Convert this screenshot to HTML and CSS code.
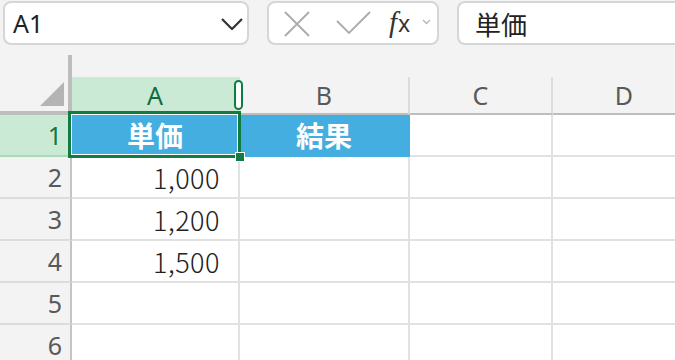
FILE: index.html
```html
<!DOCTYPE html>
<html lang="ja">
<head>
  <meta charset="UTF-8">
  <title>Sheet</title>
  <link rel="stylesheet" href="styles.css">
</head>
<body>
  <div class="toolbar">
    <div class="namebox">
      <span>A1</span>
      <svg class="chev" width="22" height="12" viewBox="0 0 22 12"><polyline points="1,1 11,11 21,1" fill="none" stroke="#333" stroke-width="2.2"/></svg>
    </div>
    <div class="fxbox">
      <svg class="icon-x" width="26" height="26" viewBox="0 0 26 26"><path d="M1 1 L25 25 M25 1 L1 25" stroke="#ababab" stroke-width="1.8" fill="none"/></svg>
      <svg class="icon-ok" width="36" height="24" viewBox="0 0 36 24"><polyline points="1,10 13,22 34,1" fill="none" stroke="#ababab" stroke-width="1.8"/></svg>
      <span class="fx"><i>f</i>x</span>
      <svg class="chev-sm" width="9" height="6" viewBox="0 0 9 6"><polyline points="1,1 4.5,4.5 8,1" fill="none" stroke="#b5b5b5" stroke-width="1.3"/></svg>
    </div>
    <div class="formula">単価</div>
  </div>
  <div class="splitbar"><div class="splitter"></div></div>

  <div class="sheet">
    <div class="corner"><div class="tri"></div></div>
    <div class="colhead active">A<div class="pill"></div></div>
    <div class="colhead">B</div>
    <div class="colhead">C</div>
    <div class="colhead">D</div>

    <div class="rowhead active">1</div>
    <div class="cell title selected">単価<div class="sel"></div><div class="handle"></div></div>
    <div class="cell title">結果</div>
    <div class="cell"></div>
    <div class="cell"></div>

    <div class="rowhead">2</div>
    <div class="cell num">1,000</div>
    <div class="cell"></div>
    <div class="cell"></div>
    <div class="cell"></div>

    <div class="rowhead">3</div>
    <div class="cell num">1,200</div>
    <div class="cell"></div>
    <div class="cell"></div>
    <div class="cell"></div>

    <div class="rowhead">4</div>
    <div class="cell num">1,500</div>
    <div class="cell"></div>
    <div class="cell"></div>
    <div class="cell"></div>

    <div class="rowhead">5</div>
    <div class="cell"></div>
    <div class="cell"></div>
    <div class="cell"></div>
    <div class="cell"></div>

    <div class="rowhead">6</div>
    <div class="cell"></div>
    <div class="cell"></div>
    <div class="cell"></div>
    <div class="cell"></div>
  </div>
</body>
</html>
```

FILE: styles.css
```css
body {
  margin: 0;
  background: #f3f3f3;
  font-family: "Noto Sans", sans-serif;
  overflow: hidden;
  height: 360px;
}
.toolbar {
  display: flex;
  gap: 18px;
  padding: 1px 0 0 3px;
  height: 45px;
  box-sizing: border-box;
}
.namebox, .fxbox, .formula {
  background: white;
  border: 2px solid #d6d6d6;
  border-radius: 8px;
  height: 44px;
  box-sizing: border-box;
  display: flex;
  align-items: center;
}
.namebox {
  width: 246px;
  padding: 0 4px 0 8px;
  justify-content: space-between;
  font-size: 25px;
  color: #222;
}
.chev {
  margin-top: 2px;
}
.fxbox {
  width: 172px;
  padding-left: 15px;
}
.icon-x {
  margin-top: 1px;
}
.icon-ok {
  margin-left: 26px;
  margin-top: -1px;
}
.fx {
  margin-left: 17px;
  font-family: "Noto Sans", sans-serif;
  font-size: 23px;
  color: #333;
  line-height: 1;
  margin-top: -2px;
}
.fx i {
  font-family: "Liberation Serif", serif;
  font-size: 29px;
  margin-right: 1px;
}
.chev-sm {
  margin-left: 12px;
  margin-top: -2px;
}
.formula {
  flex: 1;
  border-right: none;
  border-radius: 8px 0 0 8px;
  padding-left: 16px;
  font-family: "Noto Sans CJK JP", sans-serif;
  font-size: 26px;
  color: #222;
}
.splitbar {
  height: 32px;
  padding-top: 10px;
  box-sizing: border-box;
}
.splitter {
  margin-left: 68px;
  width: 4px;
  height: 22px;
  background: #bdbdbd;
}
.sheet {
  display: grid;
  grid-template-columns: 72px 168px 170px 143px 144px;
  grid-template-rows: 38px;
  grid-auto-rows: 42px;
}
.corner {
  border-right: 4px solid #bdbdbd;
  border-bottom: 4px solid #bdbdbd;
  display: flex;
  justify-content: flex-end;
  align-items: flex-end;
  padding: 0 4px 5px 0;
}
.tri {
  width: 24px;
  height: 24px;
  background: #b4b4b4;
  clip-path: polygon(100% 0, 100% 100%, 0 100%);
}
.colhead {
  position: relative;
  display: flex;
  align-items: center;
  justify-content: center;
  border-right: 2px solid #dcdcdc;
  border-bottom: 2px solid #bdbdbd;
  font-size: 25px;
  color: #595959;
}
.colhead.active {
  background: #caead6;
  color: #0f6b3a;
  border-right-color: #caead6;
}
.pill {
  position: absolute;
  left: 162px;
  top: 3px;
  width: 9px;
  height: 30px;
  box-sizing: border-box;
  border: 2px solid #107c41;
  border-radius: 5px;
  background: white;
}
.rowhead {
  display: flex;
  align-items: center;
  justify-content: flex-end;
  padding-right: 8px;
  border-right: 2px solid #c4c4c4;
  border-bottom: 2px solid #dcdcdc;
  font-size: 25px;
  color: #595959;
}
.rowhead.active {
  background: #caead6;
  color: #107c41;
  border-bottom-color: #a9dbbb;
}
.cell {
  background: white;
  border-right: 2px solid #e1e1e1;
  border-bottom: 2px solid #e1e1e1;
  font-family: "Noto Sans CJK JP", sans-serif;
  display: flex;
  align-items: center;
}
.cell.title {
  background: #44aee0;
  border-color: #44aee0;
  justify-content: center;
  color: white;
  font-weight: bold;
  font-size: 28px;
}
.cell.num {
  justify-content: flex-end;
  padding-right: 18px;
  font-size: 27px;
  font-weight: 300;
  letter-spacing: 0.5px;
  color: #222;
}
.selected {
  position: relative;
  z-index: 2;
}
.sel {
  position: absolute;
  left: -4px;
  top: -4px;
  width: 173px;
  height: 47px;
  box-sizing: border-box;
  border: 3px solid #107c41;
  box-shadow: inset 0 0 0 1px white;
}
.handle {
  position: absolute;
  left: 163px;
  top: 37px;
  width: 10px;
  height: 10px;
  box-sizing: border-box;
  border: 1px solid white;
  background: #107c41;
}
```
